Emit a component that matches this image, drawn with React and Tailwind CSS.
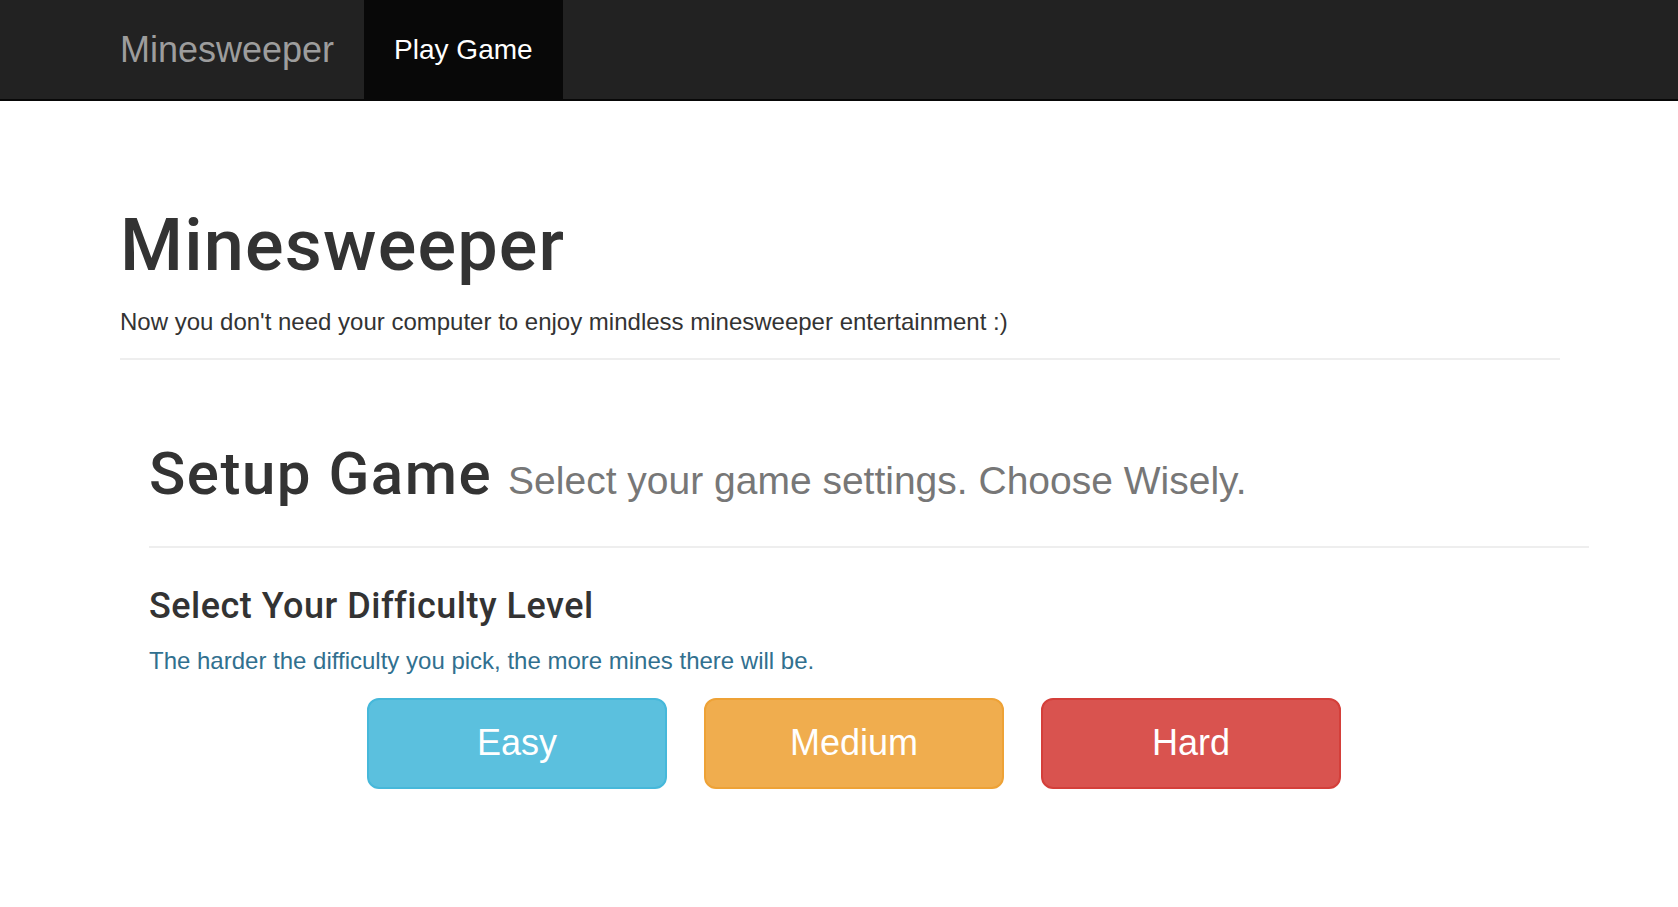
import React from 'react';

const font = { fontFamily: '"Liberation Sans", Arial, sans-serif' };
const heading = { fontFamily: 'Roboto, "Liberation Sans", Arial, sans-serif' };

function Navbar() {
  return (
    <nav className="h-[101px] bg-[#222222] border-b-2 border-[#080808]">
      <div className="flex h-[99px] pl-[90px]">
        <a className="px-[30px] flex items-center text-[36px] text-[#9d9d9d] leading-none">Minesweeper</a>
        <a className="px-[30px] flex items-center text-[28px] text-white bg-[#080808] leading-none">Play Game</a>
      </div>
    </nav>
  );
}

function DifficultyButton({ label, colorClass }) {
  return (
    <button className={`w-[300px] h-[91px] rounded-[12px] border-2 text-white text-[36px] leading-none ${colorClass}`}>
      {label}
    </button>
  );
}

export default function App() {
  return (
    <div className="min-h-[907px] bg-white text-[#333333]" style={font}>
      <Navbar />
      <div className="w-[1440px] ml-[120px]">
        <div className="pt-[105px] border-b-2 border-[#eeeeee] pb-[19px]">
          <h1 className="text-[72px] leading-[79px] font-medium tracking-[1.2px]" style={heading}>Minesweeper</h1>
          <p className="mt-[20px] text-[24px] leading-[34px]">
            Now you don&apos;t need your computer to enjoy mindless minesweeper entertainment :)
          </p>
        </div>
      </div>
      <div className="w-[1440px] ml-[149px]">
        <div className="mt-[81px] border-b-2 border-[#eeeeee] pb-[35px] flex items-baseline">
          <h1 className="text-[60px] leading-[66px] font-medium tracking-[1.5px]" style={heading}>Setup Game</h1>
          <span className="ml-[16px] text-[39px] text-[#777777]">Select your game settings. Choose Wisely.</span>
        </div>
        <h3 className="mt-[38px] text-[36px] leading-[40px] font-medium tracking-[0.5px]" style={heading}>Select Your Difficulty Level</h3>
        <p className="mt-[16px] text-[24px] leading-[37px] text-[#31708f]">
          The harder the difficulty you pick, the more mines there will be.
        </p>
        <div className="mt-[19px] ml-[218px] flex gap-[37px]">
          <DifficultyButton label="Easy" colorClass="bg-[#5bc0de] border-[#46b8da]" />
          <DifficultyButton label="Medium" colorClass="bg-[#f0ad4e] border-[#eea236]" />
          <DifficultyButton label="Hard" colorClass="bg-[#d9534f] border-[#d43f3a]" />
        </div>
      </div>
    </div>
  );
}
